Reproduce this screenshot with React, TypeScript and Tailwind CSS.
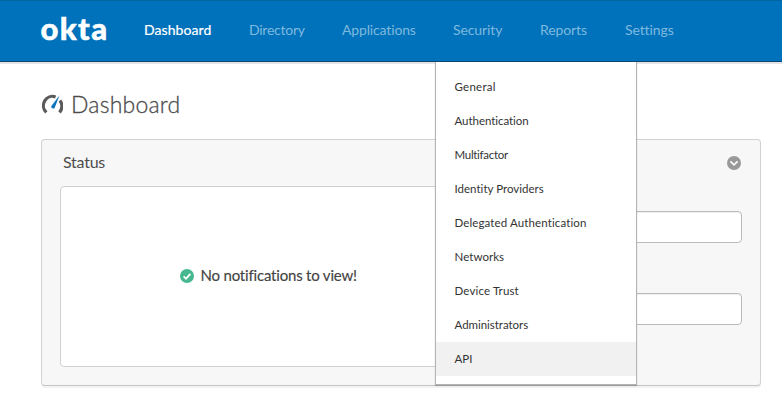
const NAV = [
  { label: 'Dashboard', box: 'w-[105px] text-white tracking-[0.08px] [-webkit-text-stroke:0.2px_white]' },
  { label: 'Directory', box: 'w-[93px] text-[#7fb9de] tracking-[-0.25px]' },
  { label: 'Applications', box: 'w-[111px] text-[#7fb9de] tracking-[-0.15px]' },
  { label: 'Security', box: 'w-[87px] text-[#7fb9de] tracking-[-0.1px]' },
  { label: 'Reports', box: 'w-[85px] text-[#7fb9de] tracking-[-0.1px]' },
  { label: 'Settings', box: 'w-[80px] text-[#7fb9de] tracking-[-0.1px]' },
];

const MENU = [
  { label: 'General', spacing: 'tracking-[0.25px]' },
  { label: 'Authentication', spacing: 'tracking-[-0.05px]' },
  { label: 'Multifactor', spacing: 'tracking-[-0.3px]' },
  { label: 'Identity Providers', spacing: 'tracking-[0.02px]' },
  { label: 'Delegated Authentication', spacing: 'tracking-[0.12px]' },
  { label: 'Networks', spacing: 'tracking-[0.05px]' },
  { label: 'Device Trust', spacing: 'tracking-[0.15px]' },
  { label: 'Administrators', spacing: 'tracking-[-0.03px]' },
  { label: 'API', spacing: 'tracking-[0px]' },
];

function GaugeIcon() {
  return (
    <svg className="h-[20px] w-[22px] shrink-0" viewBox="0 0 22 20" fill="none">
      <path d="M5.4 18.4 A9.2 9.2 0 0 1 14.6 2.9" stroke="#5a5a5a" strokeWidth="3.2" />
      <path d="M18.9 6.4 A9.2 9.2 0 0 1 18.4 18.4" stroke="#5a5a5a" strokeWidth="3.2" />
      <path d="M18.6 1.2 L13.8 13.4 A1.8 1.8 0 0 1 10.4 11.9 Z" fill="#0b75bd" />
    </svg>
  );
}

function SecurityMenu() {
  return (
    <div className="absolute left-[435px] top-[62px] z-10 h-[323px] w-[202px] border-x border-b border-[#b3b3b3] bg-white pt-2 shadow-[0_1px_1px_rgba(0,0,0,0.2)]">
      {MENU.map((item) => (
        <div
          key={item.label}
          className={`flex h-[34px] items-center pl-[18.5px] text-[11.5px] text-[#333] ${item.spacing} ${item.label === 'API' ? 'bg-[#f1f1f1]' : ''}`}
        >
          {item.label}
        </div>
      ))}
    </div>
  );
}

export default function App() {
  return (
    <div className="relative h-[407px] w-[782px] overflow-hidden bg-white font-['Lato',sans-serif]">
      <header className="flex h-[62px] border-b border-t border-b-[#0a4676] border-t-[#00659f] bg-[#0072bc] pl-[40px]">
        <div className="h-[60px] w-[104px] whitespace-nowrap pl-[0.5px] pt-[7px] text-[31px] font-black leading-[40px] tracking-[1.4px] text-white [-webkit-text-stroke:0.5px_white]">
          okta
        </div>
        <nav className="flex pt-[20px] text-[14px] leading-[18px]">
          {NAV.map((n) => (
            <a key={n.label} className={`whitespace-nowrap ${n.box}`}>
              {n.label}
            </a>
          ))}
        </nav>
      </header>
      <div className="h-[2px] bg-[#e4e4e6]" />
      <SecurityMenu />
      <main className="pl-[41px] pr-[21px]">
        <div className="flex h-[75px] items-start pt-[30px]">
          <GaugeIcon />
          <h1 className="ml-[8px] mt-[-5px] text-[23px] font-light leading-[30px] tracking-[0.2px] text-[#4c4c4c] [-webkit-text-stroke:0.3px_#4c4c4c]">Dashboard</h1>
        </div>
        <section className="h-[247px] rounded-[4px] border border-[#d2d2d2] border-b-[#c4c4c4] bg-[#f7f7f7] shadow-[0_2px_0_#f3f3f3]">
          <div className="flex h-[46px] items-center justify-between pl-[21px] pr-[19px]">
            <h2 className="pb-[2px] text-[16px] tracking-[-0.25px] text-[#4c4c4c]">Status</h2>
            <svg className="h-[14px] w-[14px]" viewBox="0 0 14 14" fill="none">
              <circle cx="7" cy="7" r="7" fill="#999" />
              <path d="M3.4 5.4 L7 8.8 L10.6 5.4" stroke="#fff" strokeWidth="1.6" />
            </svg>
          </div>
          <div className="flex">
            <div className="ml-[18px] flex h-[181px] w-[417px] items-center rounded-[4px] border border-[#d0d0d0] bg-white pb-[2px] pl-[119px]">
              <svg className="h-[14px] w-[14px] shrink-0" viewBox="0 0 14 14" fill="none">
                <circle cx="7" cy="7" r="7" fill="#46b88f" />
                <path d="M3.6 7.3 L6 9.6 L10.4 4.8" stroke="#fff" strokeWidth="1.8" />
              </svg>
              <span className="ml-[6.5px] whitespace-nowrap text-[15px] tracking-[-0.19px] text-[#444] [-webkit-text-stroke:0.15px_#444]">No notifications to view!</span>
            </div>
            <div className="mr-[18px] flex flex-1 flex-col gap-[50px] pl-[20px] pt-[25px]">
              <div className="h-[32px] rounded-[4px] border border-[#bbb] bg-white shadow-[inset_0_1px_1px_#eee]" />
              <div className="h-[32px] rounded-[4px] border border-[#bbb] bg-white shadow-[inset_0_1px_1px_#eee]" />
            </div>
          </div>
        </section>
      </main>
    </div>
  );
}
